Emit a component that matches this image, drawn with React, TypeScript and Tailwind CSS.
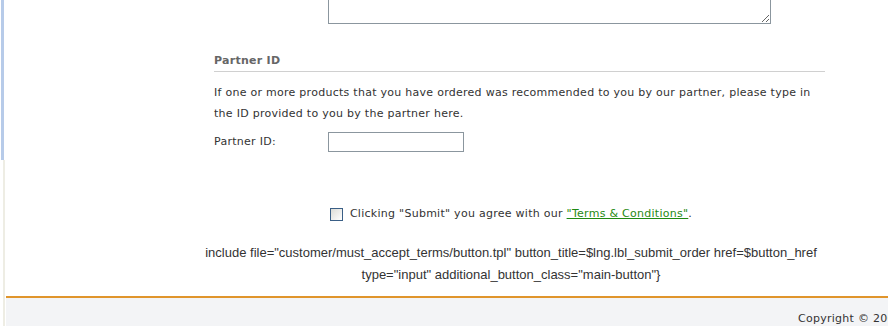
import React from "react";

const App: React.FC = () => {
  return (
    <div className="w-[888px] h-[326px] overflow-hidden bg-white relative">
      <div className="flex w-[1020px] h-[326px]">
        {/* left edge strip */}
        <div className="w-[6px] flex flex-col shrink-0">
          <div className="h-[160px] w-[3px] ml-[1px] bg-[#b7cbe9]" />
          <div className="flex-1 w-[2px] ml-[3px] bg-[#eeede4]" />
        </div>

        <div className="flex flex-col w-[1010px] font-['DejaVu_Sans',sans-serif] text-[11px] tracking-[0.27px] text-[#333]">
          {/* form section */}
          <div className="ml-[208px] w-[611px]">
            <div className="pl-[114px]">
              <textarea
                className="block w-[443px] h-[64px] -mt-[40px] border border-[#8b969e] bg-white"
                readOnly
              />
            </div>

            <h3 className="mt-[30px] font-bold text-[#666] text-[11px] leading-[14px] pb-[3px] border-b border-[#d0d0d0]">
              Partner ID
            </h3>

            <p className="mt-[10px] leading-[21px]">
              If one or more products that you have ordered was recommended to you by our partner, please type in
              <br />
              the ID provided to you by the partner here.
            </p>

            <div className="flex items-center mt-[8px]">
              <label className="w-[114px]">Partner ID:</label>
              <input
                type="text"
                className="w-[136px] h-[20px] border border-[#8b969e] bg-white"
              />
            </div>
          </div>

          {/* terms */}
          <div className="flex items-center justify-center mt-[54px]">
            <span className="w-[13px] h-[13px] border border-[#3a5f86] bg-gradient-to-br from-[#dcdcd7] to-white mr-[7px]" />
            <span>
              Clicking "Submit" you agree with our{" "}
              <a href="#" className="text-[#1f8a12] underline">
                "Terms &amp; Conditions"
              </a>
              .
            </span>
          </div>

          <div className="mt-[19px] text-center font-['Liberation_Sans',sans-serif] text-[13px] tracking-normal leading-[22px] text-[#333]">
            include file="customer/must_accept_terms/button.tpl" button_title=$lng.lbl_submit_order href=$button_href
            <br />
            type="input" additional_button_class="main-button"{"}"}
          </div>

          {/* footer */}
          <div className="mt-[10px] border-t-2 border-[#e0952c] bg-[#f3f4f6] flex-1 pt-[13px] pl-[792px]">
            <span className="whitespace-nowrap">Copyright © 2008</span>
          </div>
        </div>
      </div>
    </div>
  );
};

export default App;
